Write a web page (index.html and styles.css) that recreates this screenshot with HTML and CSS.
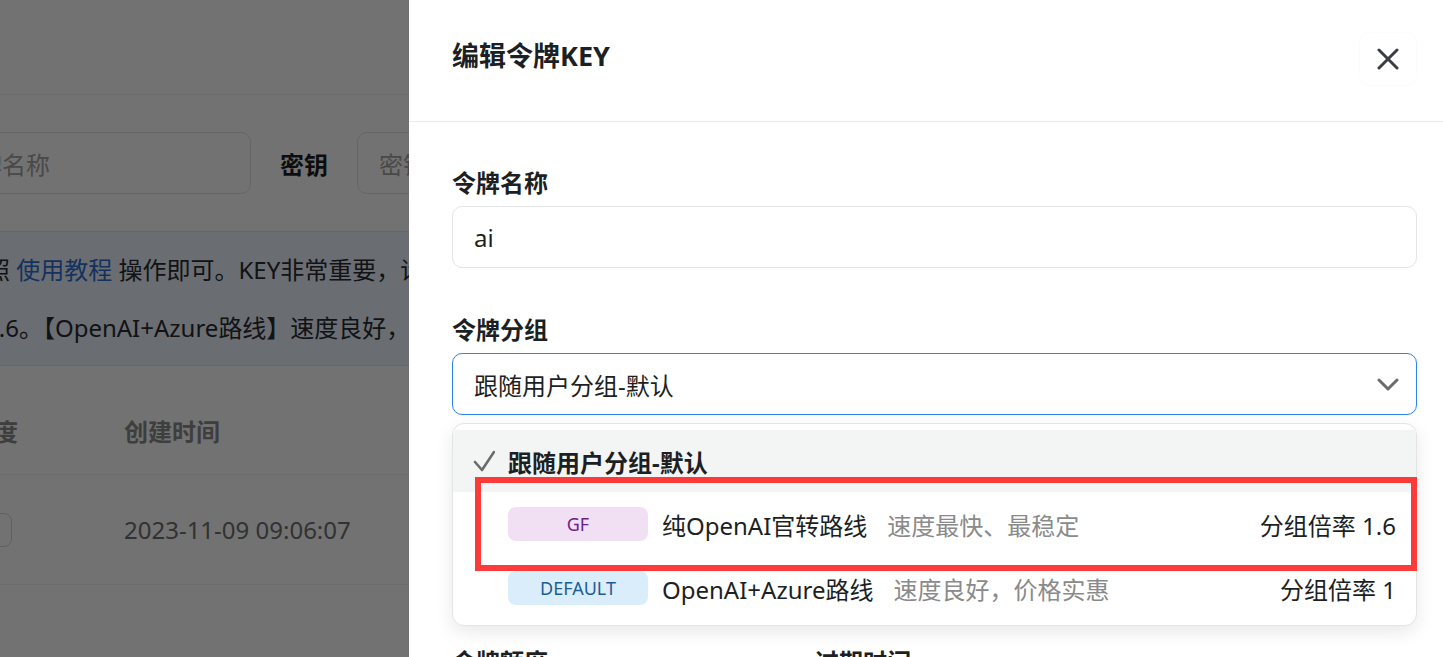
FILE: index.html
```html
<!DOCTYPE html>
<html lang="zh-CN">
<head>
<meta charset="utf-8">
<title>编辑令牌KEY</title>
<link rel="stylesheet" href="styles.css">
</head>
<body>
<div class="page">
  <div class="page-header"></div>
  <div class="search-row">
    <div class="search-input first"><span class="placeholder">令牌名称</span></div>
    <span class="search-label">密钥</span>
    <div class="search-input second"><span class="placeholder">密钥</span></div>
  </div>
  <div class="banner">
    <p class="banner-line one">请参照 <a class="link">使用教程</a> 操作即可。KEY非常重要，请勿泄露给他人。</p>
    <p class="banner-line two">分组倍率1.6。【OpenAI+Azure路线】速度良好，价格实惠。</p>
  </div>
  <div class="table">
    <div class="t-row t-head">
      <div class="t-cell c1">剩余额度</div>
      <div class="t-cell c2">创建时间</div>
    </div>
    <div class="t-row t-body">
      <div class="t-cell c1"><span class="quota-box"></span></div>
      <div class="t-cell c2">2023-11-09 09:06:07</div>
    </div>
  </div>
</div>

<div class="mask"></div>

<aside class="drawer">
  <header class="drawer-header">
    <h2 class="drawer-title">编辑令牌KEY</h2>
    <button class="close-btn" aria-label="关闭">
      <svg width="22" height="22" viewBox="0 0 22 22"><path d="M2 2 L20 20 M20 2 L2 20" stroke="#3a3d42" stroke-width="3" stroke-linecap="round" fill="none"/></svg>
    </button>
  </header>
  <div class="drawer-body">
    <div class="field">
      <div class="field-label">令牌名称</div>
      <div class="input">ai</div>
    </div>
    <div class="field select-field">
      <div class="field-label">令牌分组</div>
      <div class="input select">
        <span>跟随用户分组-默认</span>
        <svg class="chevron" width="22" height="13" viewBox="0 0 22 13"><path d="M2 2 L11 11 L20 2" stroke="#6b6b6b" stroke-width="3" stroke-linecap="round" stroke-linejoin="round" fill="none"/></svg>
      </div>
      <div class="dropdown">
        <div class="option selected">
          <svg class="check" width="22" height="22" viewBox="0 0 22 22"><path d="M2 12 L9 20 L21 2" stroke="#6b6b6b" stroke-width="2.6" stroke-linecap="round" stroke-linejoin="round" fill="none"/></svg>
          <span class="opt-text bold">跟随用户分组-默认</span>
        </div>
        <div class="option">
          <span class="tag tag-gf">GF</span>
          <span class="opt-text">纯OpenAI官转路线</span>
          <span class="opt-desc">速度最快、最稳定</span>
          <span class="opt-ratio">分组倍率 1.6</span>
        </div>
        <div class="option">
          <span class="tag tag-default">DEFAULT</span>
          <span class="opt-text">OpenAI+Azure路线</span>
          <span class="opt-desc">速度良好，价格实惠</span>
          <span class="opt-ratio">分组倍率 1</span>
        </div>
        <div class="annotation"></div>
      </div>
    </div>
    <div class="field">
      <div class="field-label">模型限制</div>
      <div class="input"></div>
      <div class="help">留空表示不限制模型</div>
    </div>
    <div class="field-grid">
      <div class="field-label">令牌额度</div>
      <div class="field-label">过期时间</div>
    </div>
  </div>
</aside>
</body>
</html>
```

FILE: styles.css
```css
* { box-sizing: border-box; }
html, body {
  margin: 0;
  padding: 0;
  width: 1443px;
  height: 657px;
  overflow: hidden;
  font-family: "Noto Sans", "Noto Sans CJK SC", sans-serif;
  background: #ffffff;
  color: #1c1f23;
}

/* ---------- background page ---------- */
.page {
  width: 1443px;
  height: 657px;
  overflow: hidden;
  background: #fff;
}
.page-header {
  height: 95px;
  border-bottom: 1px solid rgba(0,0,0,0.05);
}
.search-row {
  display: flex;
  align-items: center;
  margin-top: 37px;
  height: 62px;
}
.search-input {
  height: 62px;
  border: 1px solid #e2e3e5;
  border-radius: 10px;
  display: flex;
  align-items: center;
  padding-left: 21px;
  font-size: 24px;
  flex-shrink: 0;
}
.search-input.first {
  margin-left: -68px;
  width: 319px;
}
.search-input.second {
  width: 500px;
}
.placeholder { color: #a3a3a3; }
.search-label {
  font-size: 24px;
  font-weight: 700;
  margin: 0 29px;
  flex-shrink: 0;
}
.banner {
  margin-top: 37px;
  background: #eef5ff;
  border-top: 1px solid #dbe7f7;
  border-bottom: 1px solid #dbe7f7;
  padding: 9px 0 8px;
  white-space: nowrap;
}
.banner-line {
  margin: 0;
  font-size: 24px;
  line-height: 58px;
  color: #2a2c30;
}
.banner-line.one { margin-left: -62px; }
.banner-line.two { margin-left: -111px; }
.link { color: #2f6fd0; }

.table { margin-top: 20px; }
.t-row {
  display: flex;
  align-items: center;
  border-bottom: 1px solid rgba(0,0,0,0.05);
  white-space: nowrap;
}
.t-head { height: 89px; }
.t-body { height: 110px; }
.t-cell { font-size: 24px; flex-shrink: 0; }
.t-cell.c1 { margin-left: -78px; width: 202px; }
.t-head .t-cell { color: #8c8c8c; font-weight: 700; }
.t-body .t-cell.c2 { color: #707070; }
.quota-box {
  display: block;
  width: 90px;
  height: 34px;
  border: 1px solid #d5d5d5;
  border-radius: 8px;
}

/* ---------- mask & drawer ---------- */
.mask {
  position: fixed;
  inset: 0;
  background: rgba(0,0,0,0.553);
}
.drawer {
  position: fixed;
  top: 0;
  right: 0;
  width: 1034px;
  height: 657px;
  background: #fff;
  overflow: hidden;
}
.drawer-header {
  height: 122px;
  border-bottom: 1px solid #ebebeb;
  display: flex;
  align-items: center;
  justify-content: space-between;
  padding: 0 27px 12px 43px;
}
.drawer-title {
  margin: 0;
  font-size: 27px;
  font-weight: 700;
  color: #1c1f23;
}
.close-btn {
  width: 56px;
  height: 52px;
  margin-top: 8px;
  border: none;
  border-radius: 10px;
  background: #fff;
  box-shadow: 0 0 3px rgba(0,0,0,0.04);
  display: flex;
  align-items: center;
  justify-content: center;
  padding: 0;
}
.drawer-body {
  padding: 44px 26px 0 43px;
}
.field { margin-bottom: 45px; }
.select-field { position: relative; }
.field-label {
  font-size: 24px;
  font-weight: 700;
  line-height: 34px;
  margin-bottom: 6px;
  color: #1c1f23;
}
.input {
  height: 62px;
  border: 1px solid #e4e5e7;
  border-radius: 10px;
  padding: 0 21px;
  display: flex;
  align-items: center;
  font-size: 24px;
  color: #1c1f23;
}
.input.select {
  border-color: #2f80f0;
  justify-content: space-between;
  padding-right: 17px;
}
.help {
  margin-top: 8px;
  line-height: 30px;
  font-size: 20px;
  color: #888;
}
.field-grid {
  display: grid;
  grid-template-columns: 339px 339px;
  column-gap: 24px;
}

/* ---------- dropdown ---------- */
.dropdown {
  position: absolute;
  left: 0;
  right: 0;
  top: calc(100% + 8px);
  background: #fff;
  border: 1px solid #e3e4e6;
  border-radius: 12px;
  box-shadow: 0 6px 18px rgba(0,0,0,0.09);
  padding: 6px 0 5px;
  z-index: 2;
}
.option {
  height: 64px;
  display: flex;
  align-items: center;
  padding: 0 20px 0 55px;
  font-size: 24px;
  white-space: nowrap;
}
.option.selected {
  height: 62px;
  background: #f3f4f4;
  padding-left: 20px;
}
.check { margin-right: 13px; }
.opt-text { color: #1c1f23; }
.opt-text.bold { font-weight: 700; }
.tag {
  width: 140px;
  height: 34px;
  border-radius: 8px;
  display: inline-flex;
  align-items: center;
  justify-content: center;
  font-size: 18px;
  margin-right: 14px;
}
.tag-gf { background: #f1e0f3; color: #6d1f86; }
.tag-default { background: #d9edfb; color: #1d5d95; }
.opt-desc {
  color: #8a8a8a;
  margin-left: 20px;
}
.opt-ratio {
  margin-left: auto;
  color: #1c1f23;
}
.annotation {
  position: absolute;
  left: 22px;
  top: 53px;
  width: 942px;
  height: 94px;
  border: 6px solid #fd3a3a;
  pointer-events: none;
}
```
